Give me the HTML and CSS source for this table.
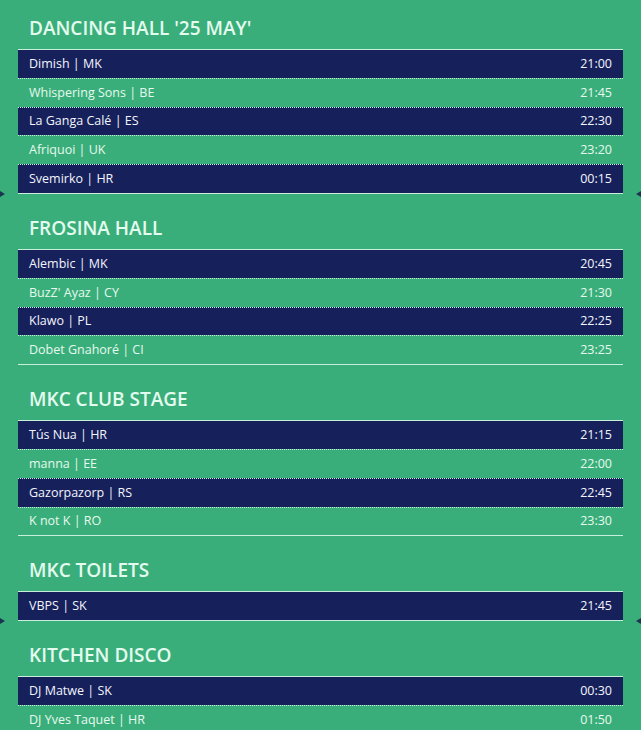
FILE: index.html
```html
<!DOCTYPE html>
<html>
<head>
<meta charset="utf-8">
<link rel="stylesheet" href="styles.css">
</head>
<body>
<div class="page">
  <section class="stage">
    <h2 class="stage-title">DANCING HALL '25 MAY'</h2>
    <div class="list">
      <div class="row dark"><span>Dimish | MK</span><span>21:00</span></div>
      <div class="row"><span>Whispering Sons | BE</span><span>21:45</span></div>
      <div class="row dark"><span>La Ganga Calé | ES</span><span>22:30</span></div>
      <div class="row"><span>Afriquoi | UK</span><span>23:20</span></div>
      <div class="row dark"><span>Svemirko | HR</span><span>00:15</span></div>
    </div>
    <span class="nav nav-left"></span><span class="nav nav-right"></span>
  </section>
  <section class="stage">
    <h2 class="stage-title">FROSINA HALL</h2>
    <div class="list">
      <div class="row dark"><span>Alembic | MK</span><span>20:45</span></div>
      <div class="row"><span>BuzZ' Ayaz | CY</span><span>21:30</span></div>
      <div class="row dark"><span>Klawo | PL</span><span>22:25</span></div>
      <div class="row"><span>Dobet Gnahoré | CI</span><span>23:25</span></div>
    </div>
  </section>
  <section class="stage">
    <h2 class="stage-title">MKC CLUB STAGE</h2>
    <div class="list">
      <div class="row dark"><span>Tús Nua | HR</span><span>21:15</span></div>
      <div class="row"><span>manna | EE</span><span>22:00</span></div>
      <div class="row dark"><span>Gazorpazorp | RS</span><span>22:45</span></div>
      <div class="row"><span>K not K | RO</span><span>23:30</span></div>
    </div>
  </section>
  <section class="stage">
    <h2 class="stage-title">MKC TOILETS</h2>
    <div class="list">
      <div class="row dark"><span>VBPS | SK</span><span>21:45</span></div>
    </div>
    <span class="nav nav-left"></span><span class="nav nav-right"></span>
  </section>
  <section class="stage">
    <h2 class="stage-title">KITCHEN DISCO</h2>
    <div class="list">
      <div class="row dark"><span>DJ Matwe | SK</span><span>00:30</span></div>
      <div class="row"><span>DJ Yves Taquet | HR</span><span>01:50</span></div>
    </div>
  </section>
</div>
</body>
</html>
```

FILE: styles.css
```css
html, body {
  margin: 0;
  padding: 0;
  background: #3aae7a;
}
body {
  font-family: "Open Sans", "Noto Sans", sans-serif;
  width: 641px;
  height: 730px;
  overflow: hidden;
}
.page {
  padding: 14px 18px 0 18px;
  display: flex;
  flex-direction: column;
  gap: 20px;
}
.stage {
  position: relative;
}
.stage-title {
  margin: 0 0 7px 0;
  padding-left: 11px;
  height: 28px;
  line-height: 28px;
  font-size: 19px;
  font-weight: 600;
  color: #e4fbef;
  letter-spacing: 0;
}
.list {
  border-top: 1px solid #c8efdc;
  border-bottom: 1px solid #c8efdc;
}
.row {
  height: 27.8px;
  display: flex;
  justify-content: space-between;
  align-items: center;
  padding: 0 11px 1px 11px;
  box-sizing: border-box;
  font-size: 12.5px;
  color: #e6f9ee;
}
.row + .row {
  border-top: 1px dotted #c8efdc;
  height: 28.8px;
}
.row.dark {
  background: #16215b;
  color: #f4f4fc;
}
.nav {
  position: absolute;
  bottom: -3px;
  width: 0;
  height: 0;
  border-top: 3px solid transparent;
  border-bottom: 3px solid transparent;
}
.nav-left {
  left: -18px;
  border-left: 5px solid #1a3550;
}
.nav-right {
  right: -18px;
  border-right: 5px solid #1a3550;
}
```
